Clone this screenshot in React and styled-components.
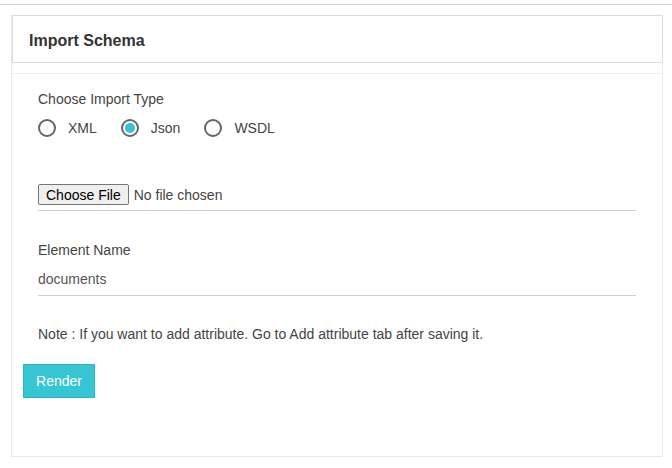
import * as React from 'react';
import styled, { createGlobalStyle } from 'styled-components';

const Global = createGlobalStyle`
    html, body {
        margin: 0;
        padding: 0;
        background: #fff;
        font-family: "Liberation Sans", Arial, sans-serif;
    }
`

const TopBar = styled.div`
    height: 4px;
    border-bottom: 1px solid #cfcfcf;
`

const Card = styled.div`
    margin: 10px 0 0 11px;
    width: 652px;
    height: 442px;
    box-sizing: border-box;
    border: 1px solid #e6eaee;
    display: flex;
    flex-direction: column;
`

const Header = styled.div`
    height: 48px;
    box-sizing: border-box;
    border: 1px solid #dcdcdc;
    margin: -1px -1px 0 0;
    display: flex;
    align-items: center;
    padding: 3px 0 0 16px;
    font-size: 16px;
    font-weight: bold;
    color: #333;
`

const Body = styled.div`
    flex: 1;
    margin-top: 10px;
    border-top: 1px solid #eceff2;
    border-left: 1px solid #e6eaee;
    border-bottom: 1px solid #e6eaee;
    margin-left: -1px;
    margin-bottom: -1px;
    padding-top: 17px;
`

const Form = styled.div`
    padding: 0 26px 0 26px;
`

const Label = styled.div`
    font-size: 14px;
    color: #444;
    line-height: 17px;
`

const RadioGroup = styled.div`
    display: flex;
    align-items: center;
    margin-top: 11px;
    gap: 24px;
`

const RadioItem = styled.label`
    display: flex;
    align-items: center;
    gap: 12px;
    font-size: 14px;
    color: #444;
`

const Circle = styled.span`
    width: 18px;
    height: 18px;
    box-sizing: border-box;
    border-radius: 50%;
    border: 2px solid #666;
    display: flex;
    align-items: center;
    justify-content: center;
    &::after {
        content: '';
        width: 10px;
        height: 10px;
        border-radius: 50%;
        background: ${props => props.checked ? '#35c3d2' : 'transparent'};
    }
`

const Field = styled.div`
    margin-top: ${props => props.top}px;
    border-bottom: 1px solid #cdd1d5;
    padding-bottom: ${props => props.bottom}px;
`

const FileInput = styled.input`
    font-family: "Liberation Sans", Arial, sans-serif;
    font-size: 14px;
    color: #444;
    &::file-selector-button {
        font-family: "Liberation Sans", Arial, sans-serif;
        font-size: 14px;
        color: #000;
        background: #efefef;
        border: 1px solid #767676;
        border-radius: 2px;
        padding: 1px 7px;
        margin-right: 5px;
        height: 21px;
    }
`

const Value = styled.div`
    font-size: 14px;
    color: #555;
    margin-top: 12px;
    line-height: 17px;
`

const Note = styled.div`
    font-size: 14px;
    color: #444;
    margin-top: 30px;
    line-height: 17px;
`

const Actions = styled.div`
    padding-left: 11px;
    margin-top: 21px;
`

const Button = styled.button`
    font-family: "Liberation Sans", Arial, sans-serif;
    font-size: 14px;
    color: #fff;
    background: #36c6d3;
    border: 1px solid #2bb8c4;
    width: 72px;
    height: 34px;
    padding: 0;
    cursor: pointer;
`

const types = ['XML', 'Json', 'WSDL'];

const App = () => {
    const [type, setType] = React.useState('Json');
    return (
        <>
            <Global />
            <TopBar />
            <Card>
                <Header>Import Schema</Header>
                <Body>
                    <Form>
                        <Label>Choose Import Type</Label>
                        <RadioGroup>
                            {types.map(t => (
                                <RadioItem key={t} onClick={() => setType(t)}>
                                    <Circle checked={type === t} />
                                    {t}
                                </RadioItem>
                            ))}
                        </RadioGroup>
                        <Field top={47} bottom={5}>
                            <FileInput type="file" />
                        </Field>
                        <Field top={31} bottom={7}>
                            <Label>Element Name</Label>
                            <Value>documents</Value>
                        </Field>
                        <Note>Note : If you want to add attribute. Go to Add attribute tab after saving it.</Note>
                    </Form>
                    <Actions>
                        <Button>Render</Button>
                    </Actions>
                </Body>
            </Card>
        </>
    )
}
export default App;
